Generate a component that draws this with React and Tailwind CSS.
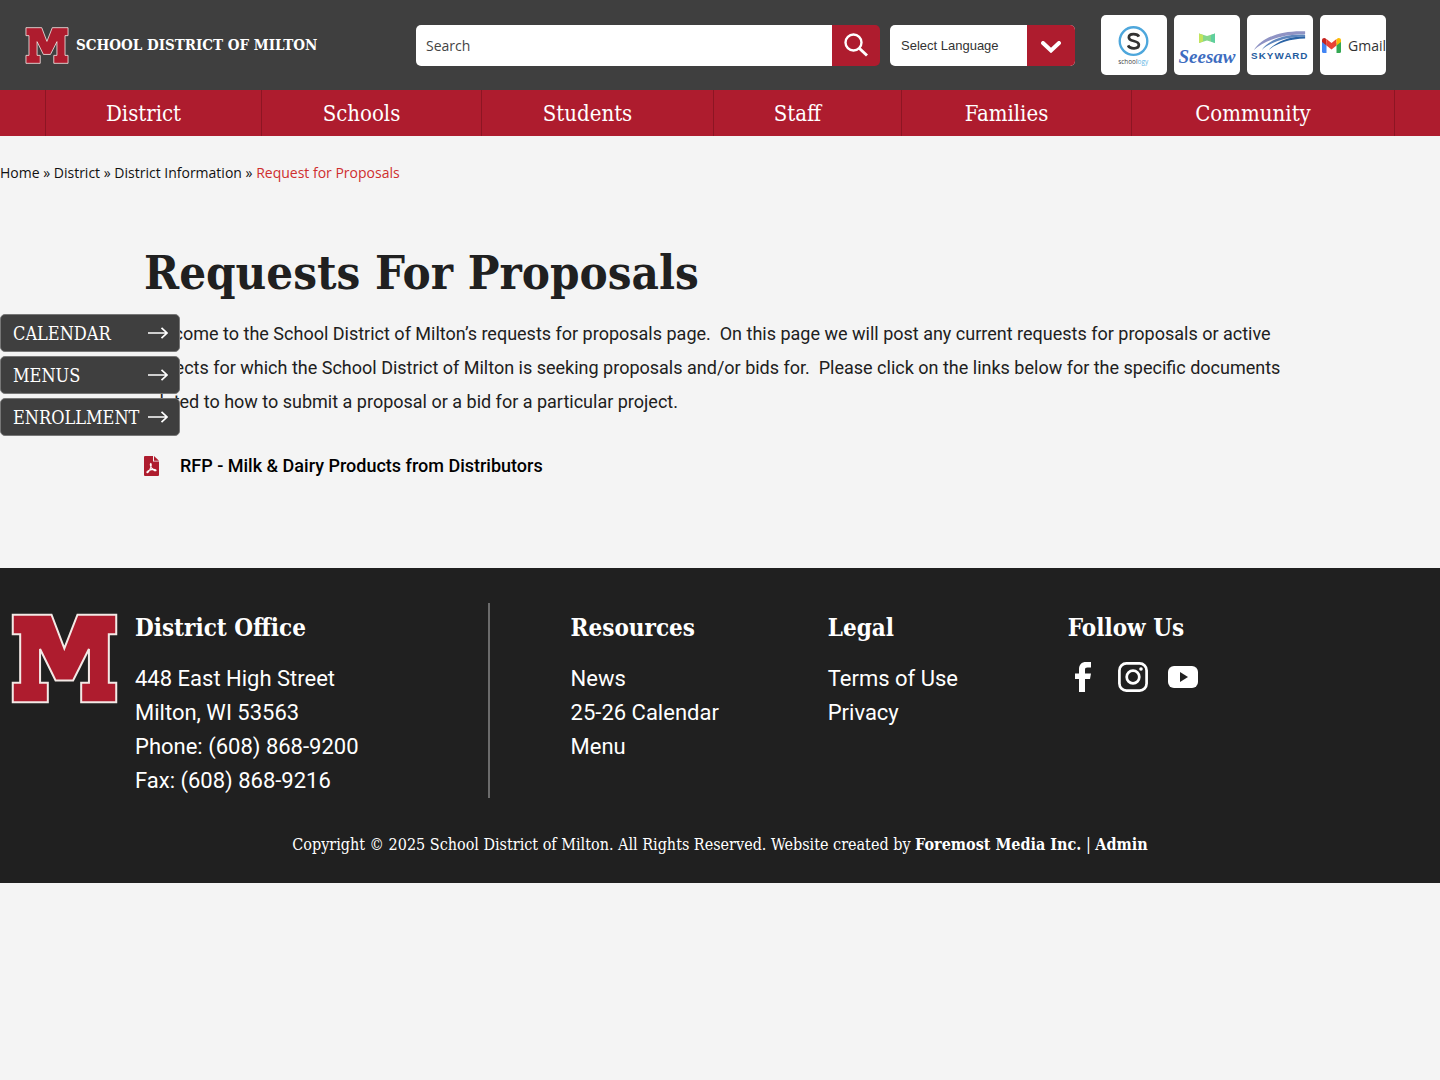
import React, { useState } from "react";

const navItems = ["District", "Schools", "Students", "Staff", "Families", "Community"];

const quickLinks = ["CALENDAR", "MENUS", "ENROLLMENT"];

const resources = ["News", "25-26 Calendar", "Menu"];

const legal = ["Terms of Use", "Privacy"];

function MiltonLogo({ className }) {
  return (
    <svg viewBox="35 71 317 270" className={className} aria-hidden="true">
      <path
        d="M40 76H155L193 176L232 76H347V134H325V278H347V336H243V278H266V178L219 271H167L121 178V278H144V336H40V278H62V134H40Z"
        fill="#ae1c2e"
        stroke="#f3e9e6"
        strokeWidth="6"
      />
    </svg>
  );
}

function SchoologyLogo() {
  return (
    <svg viewBox="0 0 67 60" className="w-full h-full" aria-label="Schoology" role="img">
      <circle cx="33" cy="26" r="14" fill="none" stroke="#4ea7dc" strokeWidth="2.4" />
      <path
        d="M38.500 21.500C37 18.300 28.300 17.800 28.300 22.300C28.300 27.200 38.400 24.600 38.400 29.800C38.400 34.700 29.200 34.300 27.500 30.400"
        fill="none"
        stroke="#333"
        strokeWidth="2.800"
      />
      <text x="17.500" y="49" fontSize="6.500" fontFamily="Open Sans, sans-serif" fill="#444">
        school<tspan fill="#62b5e5">ogy</tspan>
      </text>
    </svg>
  );
}

function SeesawLogo() {
  return (
    <svg viewBox="0 0 66 60" className="w-full h-full" aria-label="Seesaw" role="img">
      <path d="M25 18.500L33 21L41 18.500V28L33 25.500L25 28Z" fill="#86d68b" />
      <path d="M25 18.500L29 20V26.500L25 28Z" fill="#c3e45c" />
      <path d="M41 18.500L37 20V26.500L41 28Z" fill="#5fcf9e" />
      <text
        x="33"
        y="48"
        textAnchor="middle"
        fontSize="19"
        fontStyle="italic"
        fontWeight="700"
        fontFamily="Liberation Serif, serif"
        fill="#3d6cc0"
      >
        Seesaw
      </text>
    </svg>
  );
}

function SkywardLogo() {
  return (
    <svg viewBox="0 0 67 60" className="w-full h-full" aria-label="Skyward" role="img">
      <path d="M7 35C15 23 33 15 59 16V19C34 19 17 26 7 35Z" fill="#8f93c4" />
      <path d="M15 35C22 25 38 18.500 59 19.500V21C38 22 24 27 15 35Z" fill="#5f86bd" />
      <path d="M22 35C29 27 42 21 59 21V23.500C43 24 31 28 22 35Z" fill="#2a63a5" />
      <g fontSize="10" fontWeight="700" fontFamily="Liberation Sans, sans-serif" fill="#1f5c9e">
        <text x="4" y="44">S</text>
        <text x="12" y="44">K</text>
        <text x="20" y="44">Y</text>
        <text x="28" y="44">W</text>
        <text x="38" y="44">A</text>
        <text x="46" y="44">R</text>
        <text x="54" y="44">D</text>
      </g>
    </svg>
  );
}

function GmailLogo() {
  return (
    <svg viewBox="0 0 66 60" className="w-full h-full" aria-label="Gmail" role="img">
      <path d="M2 26V36.500Q2 38 3.500 38H6.500V28Z" fill="#4285f4" />
      <path d="M16.500 28V38H19.500Q21 38 21 36.500V26Z" fill="#34a853" />
      <path d="M6.500 24.500V30.500L2 27V25.500C2 23 4.500 22.600 6 23.700Z" fill="#c5221f" />
      <path d="M6.500 24L11.500 28L16.500 24V30.500L11.500 34.500L6.500 30.500Z" fill="#ea4335" />
      <path d="M16.500 24.500V30.500L21 27V25.500C21 23 18.500 22.600 17 23.700Z" fill="#fbbc04" />
      <text x="28" y="36" fontSize="14" fontFamily="Open Sans, sans-serif" fill="#333">
        Gmail
      </text>
    </svg>
  );
}

const apps = [
  { name: "Schoology", Logo: SchoologyLogo },
  { name: "Seesaw", Logo: SeesawLogo },
  { name: "Skyward", Logo: SkywardLogo },
  { name: "Gmail", Logo: GmailLogo },
];

function Header() {
  const [query, setQuery] = useState("");

  return (
    <header className="flex items-center h-[90px] bg-[#3f3f3f] pl-[25px] pr-[54px]">
      <a href="#home" className="flex items-center gap-[7px] shrink-0 text-white">
        <MiltonLogo className="w-[44px] h-[37px]" />
        <span className="text-[15px] font-semibold whitespace-nowrap">SCHOOL DISTRICT OF MILTON</span>
      </a>

      <form
        onSubmit={(e) => e.preventDefault()}
        className="flex flex-1 h-[41px] max-w-[464px] ml-auto rounded-[5px] overflow-hidden"
      >
        <input
          type="text"
          aria-label="Search"
          placeholder="Search"
          value={query}
          onChange={(e) => setQuery(e.target.value)}
          className="flex-1 min-w-0 bg-white px-[10px] font-['Open_Sans',sans-serif] text-[14px] text-[#333] placeholder:text-[#444] outline-none"
        />
        <button type="submit" aria-label="Submit search" className="w-[48px] flex items-center justify-center bg-[#ae1c2e]">
          <svg viewBox="0 0 24 24" className="w-6 h-6" fill="none" stroke="white" strokeWidth="2.4">
            <circle cx="9.500" cy="9.500" r="8" />
            <path d="M15.500 15.500L23 22.500" strokeWidth="3" />
          </svg>
        </button>
      </form>

      <div className="relative w-[185px] h-[41px] ml-[10px] shrink-0 rounded-[5px] overflow-hidden">
        <select
          aria-label="Select Language"
          className="appearance-none w-full h-full bg-white pt-px pl-[11px] font-['Liberation_Sans',sans-serif] text-[13px] text-[#333]"
        >
          <option>Select Language</option>
          <option>Spanish</option>
        </select>
        <span className="absolute right-0 top-0 w-[48px] h-full flex items-center justify-center bg-[#ae1c2e] pointer-events-none">
          <svg viewBox="0 0 20 12" className="w-5 h-3 mt-[3px]" fill="none" stroke="white" strokeWidth="4">
            <path d="M2 2L10 9.500L18 2" strokeLinecap="round" />
          </svg>
        </span>
      </div>

      <div className="flex gap-[7px] ml-[26px] shrink-0">
        {apps.map(({ name, Logo }) => (
          <a key={name} href={`#${name}`} className="w-[66px] h-[60px] rounded-[5px] bg-white overflow-hidden">
            <Logo />
          </a>
        ))}
      </div>
    </header>
  );
}

function Nav() {
  return (
    <nav className="h-[46px] bg-[#ae1c2e] px-[45px]">
      <div className="grid grid-cols-[216fr_220fr_232fr_188fr_230fr_263fr] h-full border-l border-[#8d1523]">
        {navItems.map((item) => (
          <a
            key={item}
            href={`#${item}`}
            className="flex items-center justify-center pr-5 border-r border-[#8d1523] text-[22px] text-white"
          >
            {item}
          </a>
        ))}
      </div>
    </nav>
  );
}

function QuickLinks() {
  return (
    <div className="fixed left-0 top-[314px] z-10 flex flex-col gap-1 w-[180px]">
      {quickLinks.map((label) => (
        <a
          key={label}
          href={`#${label}`}
          className="flex items-center justify-between h-[38px] pl-3 pr-[11px] rounded-[5px] border border-[#777] bg-[#3f3f3f] text-[18px] text-white"
        >
          {label}
          <svg viewBox="0 0 20 12" className="w-5 h-3 shrink-0" fill="none" stroke="white" strokeWidth="1.700">
            <path d="M0 6H19M13.500 0.800L19 6L13.500 11.200" />
          </svg>
        </a>
      ))}
    </div>
  );
}

function FooterHeading({ children }) {
  return <h2 className="text-[24px] leading-[34px] font-bold mb-[17px]">{children}</h2>;
}

function Footer() {
  return (
    <footer className="bg-[#202020] text-white pt-[35px] pb-[26px]">
      <div className="flex">
        <div className="flex w-[34%] h-[195px] pt-2 pl-[11px] border-r-2 border-[#6b6b6b]">
          <MiltonLogo className="w-[107px] h-[91px] mt-[2px] mr-[17px] shrink-0" />
          <div>
            <FooterHeading>District Office</FooterHeading>
            <address className="not-italic font-[Roboto,sans-serif] text-[22px] leading-[34px]">
              448 East High Street
              <br />
              Milton, WI 53563
              <br />
              Phone: (608) 868-9200
              <br />
              Fax: (608) 868-9216
            </address>
          </div>
        </div>

        <div className="flex-1 grid grid-cols-[257fr_240fr_372fr] pl-[81px] pt-2">
          <div>
            <FooterHeading>Resources</FooterHeading>
            <ul className="font-[Roboto,sans-serif] text-[22px] leading-[34px]">
              {resources.map((item) => (
                <li key={item}>
                  <a href={`#${item}`}>{item}</a>
                </li>
              ))}
            </ul>
          </div>
          <div>
            <FooterHeading>Legal</FooterHeading>
            <ul className="font-[Roboto,sans-serif] text-[22px] leading-[34px]">
              {legal.map((item) => (
                <li key={item}>
                  <a href={`#${item}`}>{item}</a>
                </li>
              ))}
            </ul>
          </div>
          <div>
            <FooterHeading>Follow Us</FooterHeading>
            <div className="flex gap-5">
              <a href="#facebook" aria-label="Facebook">
                <svg viewBox="0 0 30 30" className="w-[30px] h-[30px]" fill="white">
                  <path d="M11 30V17H7V11.500H11V7.500C11 2.500 13.500 0 18 0H23V5.500H19.500C17.500 5.500 17 6.200 17 8V11.500H23L22 17H17V30Z" />
                </svg>
              </a>
              <a href="#instagram" aria-label="Instagram">
                <svg viewBox="0 0 30 30" className="w-[30px] h-[30px]" fill="none" stroke="white" strokeWidth="2.700">
                  <rect x="1.400" y="1.400" width="27.200" height="27.200" rx="7" />
                  <circle cx="15" cy="15" r="6.300" />
                  <circle cx="23" cy="7" r="1.800" fill="white" stroke="none" />
                </svg>
              </a>
              <a href="#youtube" aria-label="YouTube">
                <svg viewBox="0 0 30 30" className="w-[30px] h-[30px]">
                  <rect x="0" y="4" width="30" height="22" rx="6" fill="white" />
                  <path d="M12 10V20L20 15Z" fill="#202020" />
                </svg>
              </a>
            </div>
          </div>
        </div>
      </div>

      <p className="mt-[35px] text-center text-[16px] leading-6 font-light">
        Copyright © 2025 School District of Milton. All Rights Reserved. Website created by{" "}
        <a href="#foremost" className="font-bold">Foremost Media Inc.</a> |{" "}
        <a href="#admin" className="font-bold">Admin</a>
      </p>
    </footer>
  );
}

function App() {
  return (
    <div className="min-h-screen bg-[#f4f4f4] font-['Roboto_Slab','DejaVu_Serif_Condensed','DejaVu_Serif',serif]">
      <Header />
      <Nav />
      <QuickLinks />

      <div className="pt-[26px] font-['Open_Sans',sans-serif] text-[14px] leading-[22px] text-[#111]">
        <a href="#home">Home</a> » <a href="#district">District</a> »{" "}
        <a href="#information">District Information</a> » <span className="text-[#cf2e2e]">Request for Proposals</span>
      </div>

      <main className="px-[10%] pt-[56px] pb-[87px] font-[Roboto,sans-serif] text-[18px] text-[#202020]">
        <h1 className="font-['Roboto_Slab','DejaVu_Serif_Condensed','DejaVu_Serif',serif] text-[47px] leading-[66px] font-bold">
          Requests For Proposals
        </h1>
        <p className="mt-[11px] leading-[34px]">
          Welcome to the School District of Milton’s requests for proposals page.&nbsp; On this page we will post any
          current requests for proposals or active projects for which the School District of Milton is seeking proposals
          and/or bids for.&nbsp; Please click on the links below for the specific documents related to how to submit a
          proposal or a bid for a particular project.
        </p>
        <a href="#rfp" className="flex items-center gap-[21px] mt-[32px] leading-[30px] font-medium text-black">
          <svg viewBox="0 0 15 20" className="w-[15px] h-5 shrink-0">
            <path d="M0 1Q0 0 1 0H9V5.500H15V19Q15 20 14 20H1Q0 20 0 19Z" fill="#ae1c2e" />
            <path d="M10 0L15 4.700H10Z" fill="#ae1c2e" />
            <path
              d="M6.800 7.500C8 8.500 7 11 6 13.200C5 15.200 3.800 17 3 16.500C2.200 15.600 5 14 7.500 13.600C10 13.200 12.400 13.400 12 14.500C11.500 15.500 8.500 13.600 7.300 11.500C6.500 10 6 8 6.800 7.500Z"
              fill="none"
              stroke="white"
              strokeWidth="1.100"
            />
          </svg>
          RFP - Milk &amp; Dairy Products from Distributors
        </a>
      </main>

      <Footer />
    </div>
  );
}

export default App;
